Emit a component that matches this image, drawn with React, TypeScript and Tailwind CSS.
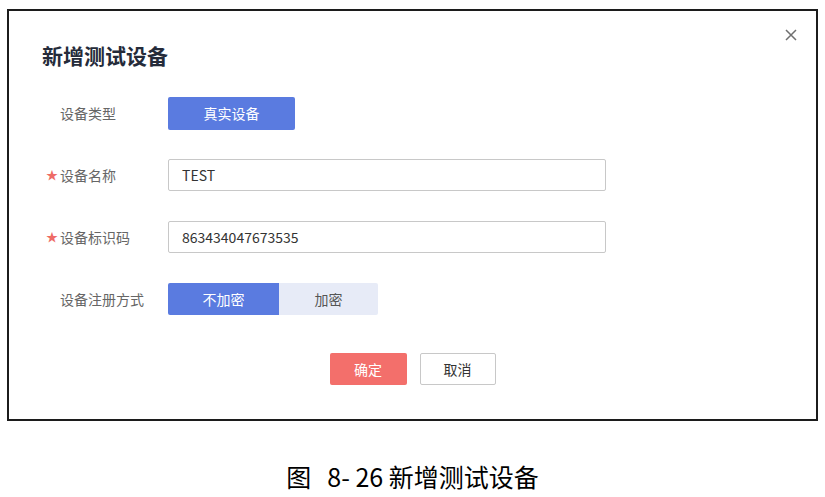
const FONT = { fontFamily: '"Noto Sans CJK SC", "Noto Sans", sans-serif' };

function Row({ label, required, children }: { label: string; required?: boolean; children: React.ReactNode }) {
  return (
    <div className="flex items-center h-[32px]">
      <div className="flex items-center w-[122px] text-[14px] text-[#666]">
        <span className="w-[14px] text-[#ee6b66] text-[12px] leading-none">{required ? '★' : ''}</span>
        <span>{label}</span>
      </div>
      {children}
    </div>
  );
}

function TextInput({ value }: { value: string }) {
  return (
    <div className="w-[438px] h-[32px] border border-[#c8c8c8] rounded-[2px] flex items-center px-[13px] text-[14px] text-[#333]">
      {value}
    </div>
  );
}

export default function App() {
  return (
    <div className="w-[825px] h-[497px] bg-white" style={FONT}>
      <div className="relative ml-[7px] mt-[9px] w-[811px] h-[412px] border-2 border-[#1c1c1c]">
        <button className="absolute top-[18px] right-[18px] w-[15px] h-[12px] flex items-center justify-center">
          <svg width="12" height="12" viewBox="0 0 12 12">
            <path d="M1 1L11 11M11 1L1 11" stroke="#6f6f6f" strokeWidth="1.5" />
          </svg>
        </button>

        <h1 className="pl-[33px] pt-[30px] text-[21px] leading-[28px] font-bold text-[#252b3a]">新增测试设备</h1>

        <div className="mt-[28px] pl-[37px] flex flex-col gap-[30px]">
          <Row label="设备类型">
            <div className="w-[127px] h-[33px] rounded-[2px] bg-[#5a7be0] text-white text-[14px] flex items-center justify-center">
              真实设备
            </div>
          </Row>
          <Row label="设备名称" required>
            <TextInput value="TEST" />
          </Row>
          <Row label="设备标识码" required>
            <TextInput value="863434047673535" />
          </Row>
          <Row label="设备注册方式">
            <div className="flex h-[32px] text-[14px]">
              <div className="w-[111px] bg-[#5a7be0] text-white flex items-center justify-center rounded-l-[2px]">不加密</div>
              <div className="w-[99px] bg-[#e7ebf7] text-[#555] flex items-center justify-center rounded-r-[2px]">加密</div>
            </div>
          </Row>
        </div>

        <div className="mt-[38px] flex justify-center gap-[13px] text-[14px]">
          <button className="w-[77px] h-[32px] rounded-[2px] bg-[#f36f6b] text-white">确定</button>
          <button className="w-[76px] h-[32px] rounded-[2px] border border-[#c8c8c8] bg-white text-[#333]">取消</button>
        </div>
      </div>

      <div className="mt-[38px] flex justify-center text-[25px] leading-[34px] text-black">
        <span className="mr-[16px]">图</span>
        <span>8- 26 新增测试设备</span>
      </div>
    </div>
  );
}
